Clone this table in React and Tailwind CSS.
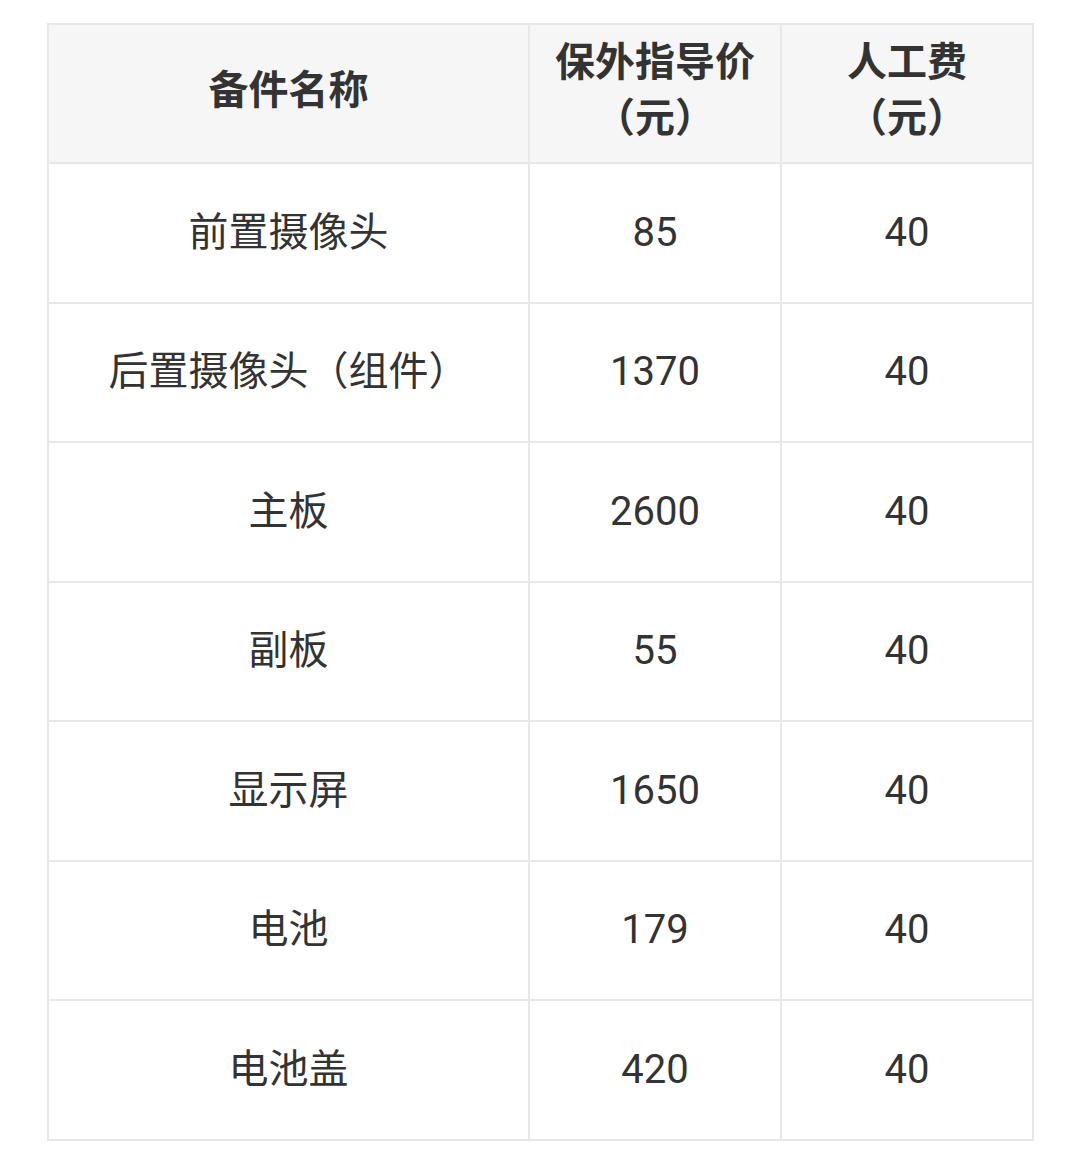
import React from "react";

const rows = [
  { name: "前置摄像头", price: "85", labor: "40" },
  { name: "后置摄像头（组件）", price: "1370", labor: "40" },
  { name: "主板", price: "2600", labor: "40" },
  { name: "副板", price: "55", labor: "40" },
  { name: "显示屏", price: "1650", labor: "40" },
  { name: "电池", price: "179", labor: "40" },
  { name: "电池盖", price: "420", labor: "40" },
];

const cell = "border-2 border-[#e8e8e8] text-center align-middle";

export default function App() {
  return (
    <div
      className="w-[1080px] h-[1165px] bg-white pt-[23px] pl-[47px] text-[#333333]"
      style={{ fontFamily: '"Roboto", "Noto Sans CJK SC", sans-serif' }}
    >
      <table className="border-collapse w-[985px] table-fixed">
        <colgroup>
          <col className="w-[481px]" />
          <col className="w-[252px]" />
          <col className="w-[252px]" />
        </colgroup>
        <thead>
          <tr className="h-[139px] bg-[#f6f6f6] text-[40px] font-bold leading-[56px]">
            <th className={cell + " pb-[6px]"}>备件名称</th>
            <th className={cell + " pb-[6px]"}>
              保外指导价
              <br />
              （元）
            </th>
            <th className={cell + " pb-[6px]"}>
              人工费
              <br />
              （元）
            </th>
          </tr>
        </thead>
        <tbody>
          {rows.map((r) => (
            <tr key={r.name} className="h-[139.5px] text-[40px]">
              <td className={cell}>{r.name}</td>
              <td className={cell}>{r.price}</td>
              <td className={cell}>{r.labor}</td>
            </tr>
          ))}
        </tbody>
      </table>
    </div>
  );
}
